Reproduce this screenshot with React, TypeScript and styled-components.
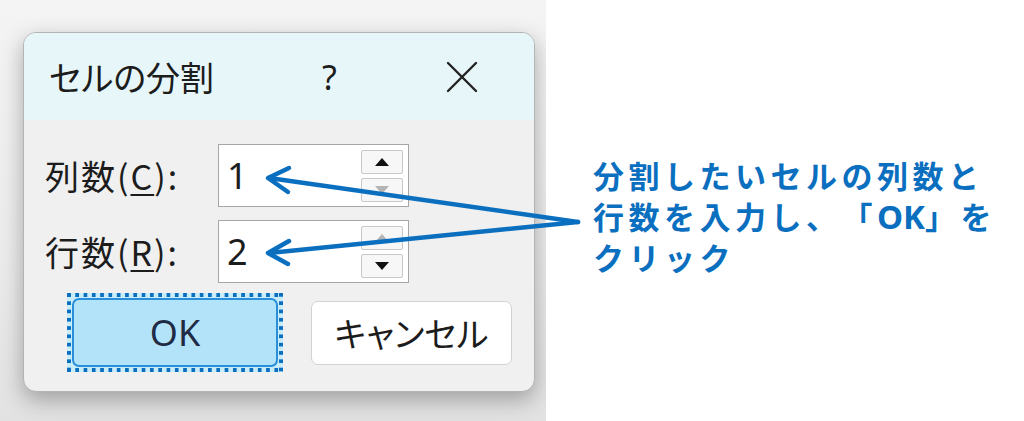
import styled, { createGlobalStyle } from 'styled-components';

const GlobalStyle = createGlobalStyle`
  html,
  body {
    margin: 0;
    padding: 0;
    background: #fff;
  }
  body {
    font-family: 'Noto Sans', 'Noto Sans CJK JP', sans-serif;
  }
`;

const ACCENT = '#0b6fbf';

interface SpinBoxProps {
  value: string;
  upDisabled?: boolean;
  downDisabled?: boolean;
}

const SpinBox = ({ value, upDisabled, downDisabled }: SpinBoxProps) => {
  return (
    <Box>
      <Value>{value}</Value>
      <SpinColumn>
        <SpinButton>
          <Triangle up disabled={upDisabled} />
        </SpinButton>
        <SpinButton>
          <Triangle disabled={downDisabled} />
        </SpinButton>
      </SpinColumn>
    </Box>
  );
};

const Arrows = () => (
  <Overlay width="1024" height="421" viewBox="0 0 1024 421">
    <g fill="none" stroke={ACCENT} strokeWidth="4.5" strokeLinecap="round" strokeLinejoin="round">
      <line x1="578" y1="222" x2="269" y2="178" />
      <polyline points="289,168 268,178 288,192" />
      <line x1="578" y1="222" x2="269" y2="253" />
      <polyline points="289,241 268,253 288,264" />
    </g>
  </Overlay>
);

const App = () => {
  return (
    <Page>
      <GlobalStyle />
      <Backdrop>
        <Dialog>
          <TitleBar>
            <Title>セルの分割</Title>
            <Help>?</Help>
            <Close>
              <svg width="32" height="32" viewBox="0 0 32 32">
                <path d="M2 2 L30 30 M30 2 L2 30" stroke="#222" strokeWidth="2.4" strokeLinecap="round" />
              </svg>
            </Close>
          </TitleBar>
          <Body>
            <Field>
              <Label>
                列数(<u>C</u>):
              </Label>
              <SpinBox value="1" downDisabled />
            </Field>
            <Field>
              <Label>
                行数(<u>R</u>):
              </Label>
              <SpinBox value="2" upDisabled />
            </Field>
            <Buttons>
              <FocusRing>
                <PrimaryButton>OK</PrimaryButton>
              </FocusRing>
              <Button>キャンセル</Button>
            </Buttons>
          </Body>
        </Dialog>
      </Backdrop>
      <Note>
        <NoteLine>分割したいセルの列数と</NoteLine>
        <NoteLine>
          行数を入力し、「<Latin>OK</Latin>」を
        </NoteLine>
        <NoteLine>クリック</NoteLine>
      </Note>
      <Arrows />
    </Page>
  );
};

export default App;

const Page = styled.div`
  position: relative;
  display: flex;
  width: 1024px;
  height: 421px;
  overflow: hidden;
  background: #fff;
`;

const Backdrop = styled.div`
  width: 546px;
  height: 421px;
  flex-shrink: 0;
  box-sizing: border-box;
  padding: 32px 0 0 23px;
  overflow: hidden;
  background: linear-gradient(to bottom, #f4f4f4 0%, #ececec 60%, #e2e2e2 100%);
`;

const Dialog = styled.div`
  width: 512px;
  height: 360px;
  box-sizing: border-box;
  border: 1px solid #b4b4b4;
  border-radius: 13px;
  background: #f0f0f0;
  overflow: hidden;
  box-shadow: 0 8px 22px rgba(0, 0, 0, 0.3);
`;

const TitleBar = styled.div`
  display: flex;
  align-items: center;
  height: 87px;
  padding-left: 25px;
  background: #e7f6f9;
  color: #1c1c1c;
`;

const Title = styled.div`
  font-family: 'Noto Sans CJK JP', sans-serif;
  font-size: 34px;
  font-feature-settings: 'palt';
  line-height: 1;
`;

const Help = styled.div`
  margin-left: 108px;
  font-family: 'Noto Sans', sans-serif;
  font-size: 34px;
  line-height: 1;
`;

const Close = styled.div`
  display: flex;
  margin-left: 109px;

  svg {
    display: block;
  }
`;

const Body = styled.div`
  display: flex;
  flex-direction: column;
  padding: 24px 0 0 21px;
`;

const Field = styled.div`
  display: flex;
  align-items: center;
  & + & {
    margin-top: 13px;
  }
`;

const Label = styled.div`
  width: 173px;
  font-family: 'Noto Sans CJK JP', sans-serif;
  font-size: 34px;
  letter-spacing: 2px;
  color: #1c1c1c;
  line-height: 1;

  u {
    text-underline-offset: 4px;
    text-decoration-thickness: 2px;
  }
`;

const Box = styled.div`
  display: flex;
  align-items: stretch;
  width: 191px;
  height: 63px;
  box-sizing: border-box;
  border: 1px solid #a6a6a6;
  background: #fff;
`;

const Value = styled.div`
  flex: 1;
  display: flex;
  align-items: center;
  padding-left: 8px;
  font-family: 'Noto Sans', sans-serif;
  font-size: 36px;
  color: #1c1c1c;
`;

const SpinColumn = styled.div`
  display: flex;
  flex-direction: column;
  gap: 4px;
  width: 42px;
  padding: 5px 5px 4px 0;
`;

const SpinButton = styled.div`
  flex: 1;
  display: flex;
  align-items: center;
  justify-content: center;
  border: 1px solid #c8c8c8;
  border-radius: 2px;
  background: #f7f7f7;
`;

const Triangle = styled.span<{ up?: boolean; disabled?: boolean }>`
  width: 0;
  height: 0;
  border-left: 7px solid transparent;
  border-right: 7px solid transparent;
  ${(props) =>
    props.up
      ? `border-bottom: 8px solid ${props.disabled ? '#b4b4b4' : '#111'};`
      : `border-top: 8px solid ${props.disabled ? '#b4b4b4' : '#111'};`}
`;

const Buttons = styled.div`
  display: flex;
  align-items: center;
  margin-top: 10px;
  padding-left: 22px;
`;

const FocusRing = styled.div`
  display: flex;
  width: 216px;
  height: 79px;
  box-sizing: border-box;
  padding: 5px;
  background-color: #c9ecfb;
  background-image: linear-gradient(to right, ${ACCENT} 50%, transparent 50%),
    linear-gradient(to right, ${ACCENT} 50%, transparent 50%),
    linear-gradient(to bottom, ${ACCENT} 50%, transparent 50%),
    linear-gradient(to bottom, ${ACCENT} 50%, transparent 50%);
  background-size: 8.3px 4px, 8.3px 4px, 4px 8.3px, 4px 8.3px;
  background-position: 0 0, 0 100%, 0 0, 100% 0;
  background-repeat: repeat-x, repeat-x, repeat-y, repeat-y;
`;

const PrimaryButton = styled.div`
  flex: 1;
  display: flex;
  align-items: center;
  justify-content: center;
  border: 2px solid #2a8fdb;
  border-radius: 7px;
  background: #b2e3f8;
  font-family: 'Noto Sans', sans-serif;
  font-size: 36px;
  color: #1f2b45;
`;

const Button = styled.div`
  display: flex;
  align-items: center;
  justify-content: center;
  width: 201px;
  height: 64px;
  margin-left: 28px;
  box-sizing: border-box;
  border: 1px solid #d2d2d2;
  border-radius: 7px;
  background: #fff;
  font-family: 'Noto Sans CJK JP', sans-serif;
  font-size: 34px;
  font-feature-settings: 'palt';
  color: #1c1c1c;
`;

const Note = styled.div`
  display: flex;
  flex-direction: column;
  padding: 154px 0 0 47px;
  font-family: 'Noto Sans CJK JP', sans-serif;
  font-weight: 700;
  font-size: 31px;
  letter-spacing: 4.5px;
  color: ${ACCENT};
  white-space: nowrap;
  text-spacing-trim: space-all;
`;

const NoteLine = styled.div`
  height: 41px;
  line-height: 41px;
`;

const Latin = styled.span`
  font-family: 'Noto Sans', 'Noto Sans CJK JP', sans-serif;
  font-size: 33px;
  letter-spacing: 0;
`;

const Overlay = styled.svg`
  position: absolute;
  left: 0;
  top: 0;
  pointer-events: none;
`;
